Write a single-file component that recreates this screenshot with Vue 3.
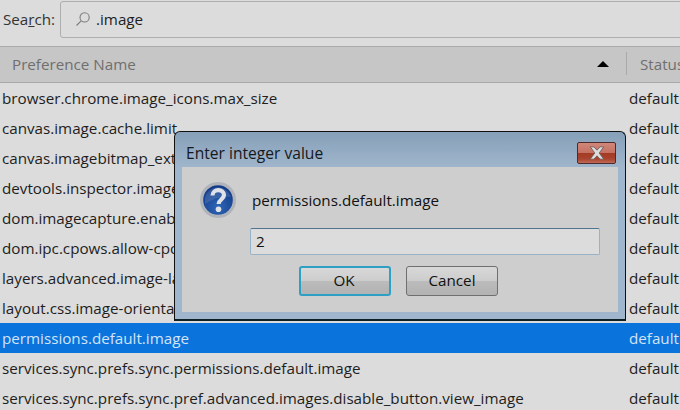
<script setup>
const rows = [
  'browser.chrome.image_icons.max_size',
  'canvas.image.cache.limit',
  'canvas.imagebitmap_extensions.enabled',
  'devtools.inspector.imagePreviewTooltipSize',
  'dom.imagecapture.enabled',
  'dom.ipc.cpows.allow-cpows-in-compat-addons',
  'layers.advanced.image-layers',
  'layout.css.image-orientation.enabled',
  'permissions.default.image',
  'services.sync.prefs.sync.permissions.default.image',
  'services.sync.prefs.sync.pref.advanced.images.disable_button.view_image'
]
const selected = 8
</script>

<template>
  <div class="page">
    <div class="search">
      <span class="search-label">Sea<u>r</u>ch:</span>
      <div class="search-box">
        <svg class="lens" width="16" height="16" viewBox="0 0 16 16" fill="none" stroke="#7d7d7d" stroke-width="1.1">
          <circle cx="9.6" cy="6.4" r="4.6" />
          <path d="M6.2 9.8 L1.5 14.5" />
        </svg>
        <span>.image</span>
      </div>
    </div>
    <div class="head">
      <span class="head-name">Preference Name</span>
      <span class="arrow"></span>
      <span class="head-sep"></span>
      <span class="head-status">Status</span>
    </div>
    <div class="list">
      <div v-for="(r, i) in rows" :key="r" class="row" :class="{ sel: i === selected }">
        <span class="name">{{ r }}</span>
        <span class="status">default</span>
      </div>
    </div>

    <div class="dialog">
      <div class="titlebar">
        <span class="title">Enter integer value</span>
        <div class="close">
          <svg width="20" height="16" viewBox="0 0 16 13">
            <path d="M2.5 1.5 L5.5 1.5 L8 4.2 L10.5 1.5 L13.5 1.5 L9.8 6.5 L13.5 11.5 L10.5 11.5 L8 8.8 L5.5 11.5 L2.5 11.5 L6.2 6.5 Z" fill="#dcdcdc" stroke="#6d5a58" stroke-width=".7" />
          </svg>
        </div>
      </div>
      <div class="client">
        <div class="msg">
          <svg class="q" width="38" height="38" viewBox="0 0 38 38">
            <defs>
              <radialGradient id="qb" cx=".5" cy=".75" r=".7">
                <stop offset="0" stop-color="#2f68b8" />
                <stop offset="1" stop-color="#123a86" />
              </radialGradient>
            </defs>
            <circle cx="19" cy="19" r="18" fill="#b0b4ba" />
            <circle cx="19" cy="19" r="14.8" fill="url(#qb)" />
            <path d="M6 16 A13.5 13.5 0 0 1 32 16 Q19 14 6 23 Z" fill="#fff" opacity=".12" />
            <path d="M13.5 14.5 C13.5 7.5 25 7.5 25 14 C25 18.5 19.6 18.5 19.6 23" fill="none" stroke="#dfe2e8" stroke-width="4.2" />
            <circle cx="19.5" cy="28.2" r="2.8" fill="#dfe2e8" />
          </svg>
          <span class="msg-text">permissions.default.image</span>
        </div>
        <div class="input">2</div>
        <div class="buttons">
          <div class="btn ok">OK</div>
          <div class="btn">Cancel</div>
        </div>
      </div>
    </div>
  </div>
</template>

<style scoped>
.page {
  position: relative;
  width: 680px;
  height: 410px;
  overflow: hidden;
  background: #dcdcdc;
  font-family: "Open Sans", "Noto Sans", sans-serif;
  font-size: 15.2px;
  color: #1e1e1e;
}
.search {
  display: flex;
  align-items: flex-start;
  padding: 1px 0 0 3px;
  box-sizing: border-box;
  border-bottom: 1px solid #aaaaaa;
  height: 47px;
}
.search-label {
  width: 57px;
  line-height: 36px;
  color: #333;
}
.search-box {
  flex: 1;
  height: 37px;
  margin-right: -10px;
  box-sizing: border-box;
  border: 1px solid #aeaeae;
  border-radius: 3px;
  display: flex;
  align-items: center;
  padding: 0 0 2px 14px;
  gap: 5px;
}
.lens { flex: none; }
.head {
  height: 36px;
  box-sizing: border-box;
  background: #c6c6c6;
  border-bottom: 1px solid #a8a8a8;
  display: flex;
  align-items: center;
  padding: 0 0 2px 12px;
  color: #6f6f6f;
}
.head-name { flex: 1; }
.arrow {
  width: 0;
  height: 0;
  border-left: 6px solid transparent;
  border-right: 6px solid transparent;
  border-bottom: 6px solid #000;
  margin-right: 17px;
}
.head-sep {
  width: 1px;
  height: 23px;
  background: #a9a9a9;
  margin-right: 13px;
}
.head-status { width: 40px; white-space: nowrap; }
.row {
  height: 30px;
  display: flex;
  align-items: center;
  padding-left: 2px;
  white-space: nowrap;
}
.row.sel {
  background: #0a73dc;
  color: #d3e4f6;
}
.name {
  width: 627px;
  flex: none;
  overflow: hidden;
}
.dialog {
  position: absolute;
  left: 174px;
  top: 131px;
  width: 452px;
  height: 190px;
  box-sizing: border-box;
  border: 1px solid #111;
  border-bottom: 2px solid #0d2024;
  border-radius: 6px 6px 0 0;
  padding: 0 7px 7px;
  background: linear-gradient(#86a0b9, #a0b6cc 36px);
  display: flex;
  flex-direction: column;
}
.titlebar {
  height: 35px;
  flex: none;
  display: flex;
  align-items: center;
  justify-content: space-between;
  padding: 7px 2px 0 4px;
  box-sizing: border-box;
}
.title { color: #15181c; font-size: 15.6px; }
.close {
  width: 39px;
  height: 22px;
  box-sizing: border-box;
  border: 1px solid #4d2a2c;
  border-radius: 2px;
  background: linear-gradient(#d1877a, #c47162 50%, #a43a24 50%, #a9442e 80%, #c06a58);
  display: flex;
  align-items: center;
  justify-content: center;
}
.client {
  flex: 1;
  background: #cecece;
  display: flex;
  flex-direction: column;
}
.msg {
  display: flex;
  align-items: center;
  height: 61px;
  padding: 5px 0 0 17px;
  box-sizing: border-box;
  flex: none;
}
.q { flex: none; }
.msg-text { margin-left: 15px; color: #111; }
.input {
  margin-left: 68px;
  width: 350px;
  height: 27px;
  box-sizing: border-box;
  border: 1px solid #98b2c8;
  border-top-color: #4f7590;
  border-radius: 2px;
  background: #dcdcdc;
  padding-left: 5px;
  line-height: 25px;
  color: #111;
}
.buttons {
  display: flex;
  gap: 15px;
  margin: 11px 0 0 117px;
}
.btn {
  width: 92px;
  height: 30px;
  box-sizing: border-box;
  border: 1px solid #6f6f6f;
  border-radius: 3px;
  background: linear-gradient(#d8d8d8, #cdcdcd 48%, #bcbcbc 50%, #b4b4b4 90%);
  text-align: center;
  line-height: 27px;
  color: #111;
}
.btn.ok {
  border: 2px solid #2ea0c4;
  line-height: 25px;
  padding-right: 2px;
}
</style>

<style>
body { margin: 0; }
</style>
